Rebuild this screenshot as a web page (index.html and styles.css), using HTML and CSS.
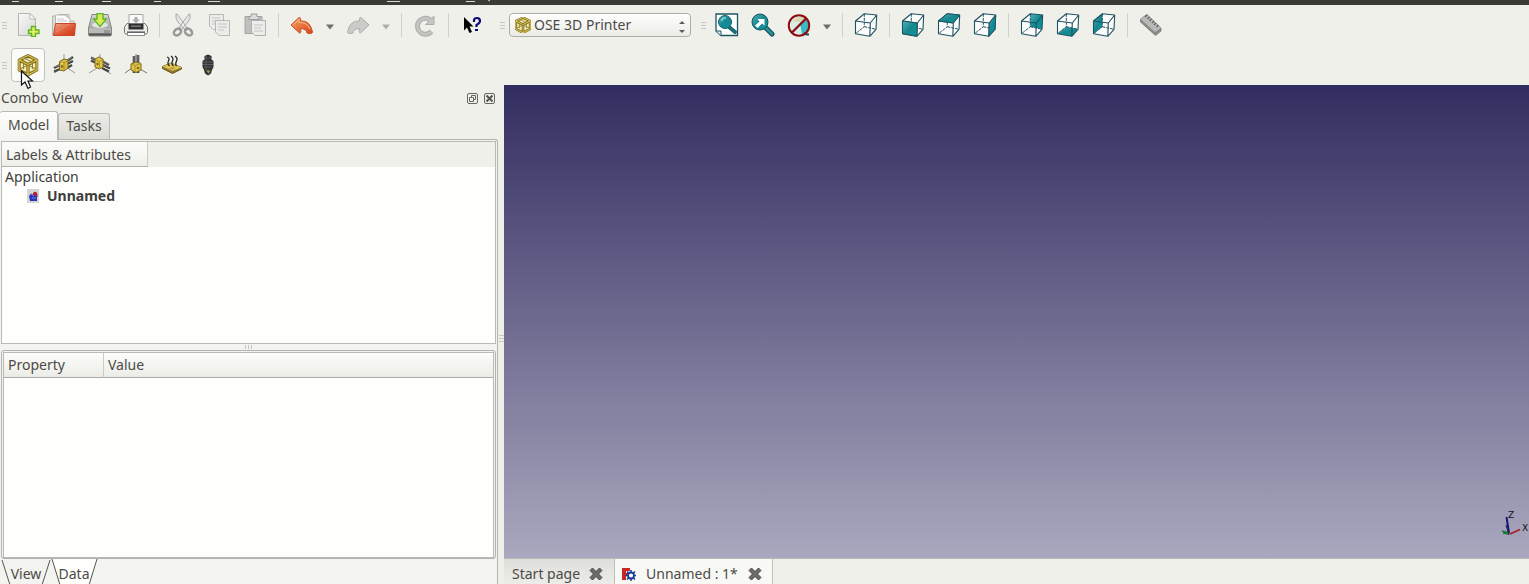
FILE: index.html
```html
<!DOCTYPE html>
<html lang="en">
<head>
<meta charset="utf-8">
<title>FreeCAD</title>
<link rel="stylesheet" href="styles.css">
</head>
<body>
<svg class="defs" aria-hidden="true">
  <defs>
    <linearGradient id="teal" x1="0" y1="0" x2="1" y2="1"><stop offset="0" stop-color="#4fb3ba"/><stop offset=".5" stop-color="#15888f"/><stop offset="1" stop-color="#0c979c"/></linearGradient>
    <linearGradient id="orange" x1="0" y1="0" x2="1" y2="1"><stop offset="0" stop-color="#f5a45f"/><stop offset="1" stop-color="#d9441b"/></linearGradient>
    <linearGradient id="red" x1="0" y1="0" x2="1" y2="1"><stop offset="0" stop-color="#f0a585"/><stop offset=".6" stop-color="#dd5532"/><stop offset="1" stop-color="#cf3517"/></linearGradient>
    <linearGradient id="paper" x1="0" y1="0" x2="1" y2="1"><stop offset="0" stop-color="#fafafa"/><stop offset="1" stop-color="#d6d6d4"/></linearGradient>
    <linearGradient id="metal" x1="0" y1="0" x2="0" y2="1"><stop offset="0" stop-color="#d8d8d6"/><stop offset="1" stop-color="#8a8a88"/></linearGradient>
    <symbol id="wire" viewBox="0 0 24 24">
      <path d="M10.3 .8V13.7L1.5 20.7M10.3 13.7L22 16.3" fill="none" stroke="#1f5261" stroke-width="1" stroke-dasharray="3 1"/>
      <path d="M1.5 8L10.3 .8L22.700 2L16.3 10ZM1.5 8V20.7L15.8 23.3L16.3 10M15.8 23.3L22 16.3L22.700 2" fill="none" stroke="#1f5261" stroke-width="1.1" stroke-linejoin="round"/>
    </symbol>
    <symbol id="frame" viewBox="0 0 24 24">
      <path d="M12 2.500L21 7V17L12 22L3 17V7Z" fill="#c4ac42"/>
      <path d="M5 10L10 12.500V18.500L5 16ZM19 10L14 12.500V18.500L19 16ZM12 5L16.500 7L12 9.500L7.500 7Z" fill="#f3efd2"/>
      <path d="M12 2.500L21 7V17L12 22L3 17V7ZM3 7L12 11.500L21 7M12 11.500V22" fill="none" stroke="#746319" stroke-width="2.600" stroke-linejoin="round"/>
      <path d="M12 2.500L21 7V17L12 22L3 17V7ZM3 7L12 11.500L21 7M12 11.500V22" fill="none" stroke="#dcc65a" stroke-width="1.300" stroke-linejoin="round"/>
      <path d="M4 16L12 12L20 16M7.500 9.500V16M16.500 9.500V16M8 5L16 9" fill="none" stroke="#97832b" stroke-width="1.100"/>
    </symbol>
    <symbol id="cross" viewBox="0 0 14 14"><path d="M1 3.500L3.500 1L7 4.500L10.500 1L13 3.500L9.500 7L13 10.500L10.500 13L7 9.500L3.500 13L1 10.500L4.500 7Z" fill="#6b6c68" stroke="#4a4b47" stroke-linejoin="round"/></symbol>
  </defs>
</svg>

<div class="menubar">
  <svg width="500" height="5"><path d="M12 1.500H19M55 1.500H63M102 1.500H111M154 1.500H161M208 1.500H220M387 1.500H400M466 1.500H475" stroke="#d8d7d0"/><path d="M488 0L490 1" stroke="#d8d7d0"/></svg>
</div>

<header class="toolbars">
  <div class="toolrow">
    <div class="toolgroup file-tools">
      <span class="grip"></span>
      <button class="tool" aria-label="New"><svg viewBox="0 0 24 24"><path d="M2.500 .5H14L19.500 6V22.500H2.500Z" fill="url(#paper)" stroke="#b4b4b1"/><path d="M14 .5V6H19.500Z" fill="#fff" stroke="#bababa"/><path d="M15.500 13.500H19.500V17H23V20.500H19.500V23.500H15.500V20.500H12.500V17H15.500Z" fill="#e2ee5e" stroke="#5bb52a" stroke-width="1.400"/></svg></button>
      <button class="tool" aria-label="Open"><svg viewBox="0 0 24 24"><path d="M.5 22V3H7V1.500H17V8H22V22Z" fill="#deded9" stroke="#b5b5b0"/><path d="M3.500 2H13L18 6V12H3.500Z" fill="#fafafa" stroke="#b8b8b3"/><path d="M5 6H12M5 8H15" stroke="#c9c9c9"/><path d="M3.500 10.500H23.500L22.500 22.500H1.500Z" fill="url(#red)" stroke="#ca452a"/><path d="M4 19L17 11" stroke="#f3a080" stroke-dasharray="1 1"/></svg></button>
      <button class="tool" aria-label="Save"><svg viewBox="0 0 24 24"><path d="M4 1.500H20L23.500 15V21.500Q23.500 23 22 23H2Q.5 23 .5 21.500V15Z" fill="url(#metal)" stroke="#858583"/><path d="M1 15H23V20H1Z" fill="#b9b9b7"/><ellipse cx="12" cy="12" rx="8" ry="3" fill="#e3e3df"/><path d="M1 21.500H23" stroke="#555" stroke-width="2"/><path d="M17 17V20M19 17V20M21 17V20" stroke="#777"/><path d="M9 .5H15V6H18.500L12 13.500L5.500 6H9Z" fill="#d8ed4d" stroke="#5cb52e" stroke-width="1.400"/></svg></button>
      <button class="tool" aria-label="Print"><svg viewBox="0 0 24 24"><path d="M5 12V1.500H19V12" fill="#fafafa" stroke="#a7a7a5"/><path d="M10.500 4H13.500V6.500H16L12 10L8 6.500H10.500Z" fill="#aaa"/><path d="M3 10.500H21L23.500 14V19.500Q23.500 21 22 21H2Q.5 21 .5 19.500V14Z" fill="#ededeb" stroke="#777"/><path d="M4.500 11H19.500V16.500H4.500Z" fill="#2e3030"/><path d="M7 12.500H17V14H7Z" fill="#777"/><path d="M3.500 19.500H20.500V22.500H3.500Z" fill="#fff" stroke="#888"/><path d="M3 19H21" stroke="#444"/></svg></button>
      <span class="sep"></span>
      <button class="tool" aria-label="Cut"><svg viewBox="0 0 24 24"><path d="M5 1Q4 5 7 9L15 18L17 16L6 1ZM19 1Q20 5 17 9L9 18L7 16L18 1Z" fill="#e8e8e5" stroke="#aaa"/><ellipse cx="6.500" cy="19" rx="4" ry="3" fill="none" stroke="#999b98" stroke-width="2.500" transform="rotate(-40 6.500 19)"/><ellipse cx="17.500" cy="19" rx="4" ry="3" fill="none" stroke="#999b98" stroke-width="2.500" transform="rotate(40 17.500 19)"/></svg></button>
      <button class="tool" aria-label="Copy"><svg viewBox="0 0 24 24"><g fill="#ececea" stroke="#b7b8b5"><path d="M2.500 1.500H16.500V16.500H6L2.500 13Z"/><path d="M8.500 7.500H22.500V22.500H12L8.500 19Z"/></g><path d="M5 5H13M5 8H8M5 11H8M11 11H20M11 14H20M11 17H17" stroke="#c4c5c1"/></svg></button>
      <button class="tool" aria-label="Paste"><svg viewBox="0 0 24 24"><path d="M2 3.500H19V20.500H2Z" fill="#bfc0bd" stroke="#a5a6a3"/><path d="M6 3.500H8V1H14V3.500H16V6.500H6Z" fill="#dbdcda" stroke="#9c9d9a"/><path d="M8.500 7.500H22.500V22.500H12L8.500 19Z" fill="#ededeb" stroke="#b1b2af"/><path d="M11 12H20M11 15H18M11 18H20" stroke="#c4c5c1"/></svg></button>
      <span class="sep"></span>
      <button class="tool" aria-label="Undo"><svg viewBox="0 0 24 24"><path d="M1 12L9 4.500Q11 4 10.500 8Q20 7 22.500 19Q22 21.500 17 20Q17 16 10.500 15.500Q11.500 20 9.500 20Z" fill="url(#orange)" stroke="#c84f24" stroke-linejoin="round"/><path d="M3 12L9 6.500V9.500Q17 9 20 16" fill="none" stroke="#f7bd8e"/></svg></button>
      <button class="more" aria-label="Undo history"><svg viewBox="0 0 8 6"><path d="M0 .5H8L4 5.500Z" fill="#6e6f6b"/></svg></button>
      <button class="tool" aria-label="Redo"><svg viewBox="0 0 24 24"><path d="M23 12L15 4.500Q13 4 13.500 8Q4 7 1.500 19Q2 21.500 7 20Q7 16 13.500 15.500Q12.500 20 14.500 20Z" fill="#cbccc9" stroke="#adaeab" stroke-linejoin="round"/></svg></button>
      <button class="more" aria-label="Redo history"><svg viewBox="0 0 8 6"><path d="M0 .5H8L4 5.500Z" fill="#aeafab"/></svg></button>
      <span class="sep"></span>
      <button class="tool" aria-label="Refresh"><svg viewBox="0 0 24 24"><path d="M18.500 18.500A8 8 0 1 1 17.500 7" fill="none" stroke="#adaeab" stroke-width="5"/><path d="M21 3V11.500H12.500Z" fill="#c5c6c3" stroke="#adaeab" stroke-linejoin="round"/><path d="M18.500 18.500A8 8 0 1 1 17.500 7" fill="none" stroke="#c3c4c1" stroke-width="3"/></svg></button>
      <span class="sep"></span>
      <button class="tool" aria-label="What's this?"><svg viewBox="0 0 24 24"><path d="M4 4V17.500L7 14.500L9.500 20L12 19L9.500 13.500H13.500Z" fill="#000"/><path d="M14 9V7.500Q14 5 17 5Q20 5 20 8Q20 10 16.500 12V14M15 17H18" fill="none" stroke="#0a0a78" stroke-width="2.200"/></svg></button>
    </div>
    <div class="toolgroup bench-tools">
      <span class="grip"></span>
      <label class="bench"><svg viewBox="2 2 20 20"><use href="#frame" width="24" height="24"/></svg>
        <select aria-label="Workbench"><option>OSE 3D Printer</option></select>
        <svg class="spin" viewBox="0 0 6 12"><path d="M0 3H6L3 0ZM0 9H6L3 12Z" fill="#5c5d59"/></svg>
      </label>
    </div>
    <div class="toolgroup view-tools">
      <span class="grip"></span>
      <button class="tool" aria-label="Fit all"><svg viewBox="0 0 24 24"><path d="M1 1H22.500V22.500H6L1 18Z" fill="#fff" stroke="#1c5464" stroke-width="1.300"/><path d="M1 18H6V22.500" fill="#d8e5e8" stroke="#1c5464"/><path d="M14 14L20 19" stroke="#1b6a76" stroke-width="4" stroke-linecap="round"/><circle cx="10" cy="9" r="6.500" fill="url(#teal)" stroke="#17616d"/><path d="M6.500 8Q7 4.500 11 5" fill="none" stroke="#8ccdd1" stroke-width="1.500"/></svg></button>
      <button class="tool" aria-label="Fit selection"><svg viewBox="0 0 24 24"><path d="M15 15L21 21" stroke="#164f5c" stroke-width="5" stroke-linecap="round"/><path d="M15 15L21 21" stroke="#24949b" stroke-width="2.500" stroke-linecap="round"/><circle cx="9" cy="9" r="8" fill="url(#teal)" stroke="#17515d"/><path d="M4 12.500L8.500 8.500L6.500 6H13.500V12.500L11 10.500L6.500 15Z" fill="#fff"/></svg></button>
      <button class="tool" aria-label="Draw style"><svg viewBox="0 0 24 24"><path d="M4 8L11 3H20V16L14 22L4 18Z" fill="#d8ece8"/><path d="M13 10L21 6V17L15 22Z" fill="#39bdc4"/><path d="M5 8L11 4H18L13 9Z" fill="#d6d9aa"/><path d="M17 20L20 21.500H22" stroke="#174d5b" stroke-width="2"/><circle cx="12" cy="12.500" r="10.200" fill="none" stroke="#8c0c12" stroke-width="2"/><path d="M5 19.500L19 5.500" stroke="#8c0c12" stroke-width="2.300"/></svg></button>
      <button class="more" aria-label="Draw styles"><svg viewBox="0 0 8 6"><path d="M0 .5H8L4 5.500Z" fill="#6e6f6b"/></svg></button>
      <span class="sep"></span>
      <button class="tool" aria-label="Axonometric"><svg viewBox="0 0 24 24"><path d="M1.500 8L10.300 .8L22.700 2L22 16.300L15.800 23.300L1.500 20.700Z" fill="#fbfcfb"/><use href="#wire"/></svg></button>
      <span class="sep"></span>
      <button class="tool" aria-label="Front"><svg viewBox="0 0 24 24"><path d="M1.500 8L10.300 .8L22.700 2L22 16.300L15.800 23.300L1.500 20.700Z" fill="#fbfcfb"/><use href="#wire"/><path d="M1.500 8L16.300 10L15.800 23.300L1.500 20.700Z" fill="url(#teal)" stroke="#1f5261"/></svg></button>
      <button class="tool" aria-label="Top"><svg viewBox="0 0 24 24"><path d="M1.500 8L10.300 .8L22.700 2L22 16.300L15.800 23.300L1.500 20.700Z" fill="#fbfcfb"/><use href="#wire"/><path d="M1.500 8L10.300 .8L22.700 2L16.300 10Z" fill="url(#teal)" stroke="#1f5261"/></svg></button>
      <button class="tool" aria-label="Right"><svg viewBox="0 0 24 24"><path d="M1.500 8L10.300 .8L22.700 2L22 16.300L15.800 23.300L1.500 20.700Z" fill="#fbfcfb"/><use href="#wire"/><path d="M16.300 10L22.700 2L22 16.300L15.800 23.300Z" fill="url(#teal)" stroke="#1f5261"/></svg></button>
      <span class="sep"></span>
      <button class="tool" aria-label="Rear"><svg viewBox="0 0 24 24"><path d="M1.500 8L10.300 .8L22.700 2L22 16.300L15.800 23.300L1.500 20.700Z" fill="#fbfcfb"/><path d="M10.300 .8L22.700 2L22 16.300L10.300 13.700Z" fill="url(#teal)"/><use href="#wire"/></svg></button>
      <button class="tool" aria-label="Bottom"><svg viewBox="0 0 24 24"><path d="M1.500 8L10.300 .8L22.700 2L22 16.300L15.800 23.300L1.500 20.700Z" fill="#fbfcfb"/><path d="M1.500 20.700L10.300 13.700L22 16.300L15.800 23.300Z" fill="url(#teal)"/><use href="#wire"/></svg></button>
      <button class="tool" aria-label="Left"><svg viewBox="0 0 24 24"><path d="M1.500 8L10.300 .8L22.700 2L22 16.300L15.800 23.300L1.500 20.700Z" fill="#fbfcfb"/><path d="M1.500 8L10.300 .8V13.700L1.500 20.700Z" fill="url(#teal)"/><use href="#wire"/></svg></button>
      <span class="sep"></span>
      <button class="tool" aria-label="Measure"><svg viewBox="0 0 24 24"><path d="M1.500 6L8 1.500L22 15V18L16.500 22.500L1.500 9Z" fill="#8a8b88" stroke="#858683"/><path d="M1.500 6L8 1.500L22 15L16 19Z" fill="#b9bab7"/><path d="M8 2L6 4M10.500 4L8.500 6M12.500 6L10.500 8M15 8L13 10M17 10L15 12M19.500 12L17.500 14" stroke="#5e5f5c" stroke-width="1.200"/></svg></button>
    </div>
  </div>
  <div class="toolrow">
    <div class="toolgroup">
      <span class="grip"></span>
      <button class="tool active" aria-label="Add frame"><svg viewBox="0 0 24 24"><use href="#frame"/></svg></button>
      <button class="tool" aria-label="Add X axis"><svg viewBox="0 0 24 24"><path d="M12 1V9M2 20L9 16M14 14L23 20" fill="none" stroke="#999a95"/><path d="M2 15L8 12M15 8L21 4M2 18.500L8 16M15 11L21 8M15 15L20 12" stroke="#454747" stroke-width="2.300"/><path d="M3 14L8 11.500M15 7L20 4" stroke="#858786"/><path d="M7.500 8.500L12 6L16 7V15L12 18L7.500 17Z" fill="#d8bd3e" stroke="#7d671c"/><path d="M8 9L12 10V17M12 10L16 7.500" fill="none" stroke="#a88f2d"/><path d="M9 10L11 10.500" stroke="#f3e78a"/><circle cx="10" cy="13.500" r="1.200" fill="#79661d"/></svg></button>
      <button class="tool" aria-label="Add Y axis"><svg viewBox="0 0 24 24"><path d="M12 1V6M1 20L9 15M15 16L23 21" fill="none" stroke="#999a95"/><path d="M3 4.500L8 7M14 8L21 12M3 7.500L7 9.500M14 11.500L22 15.500M14 15L21 18.500" stroke="#454747" stroke-width="2.300"/><path d="M3 4L8 6.500M15 8L21 11" stroke="#858786"/><path d="M7 6L10.500 4L15 6V14L11.500 16L7 14Z" fill="#e1c743" stroke="#7d671c"/><path d="M7 6.500L11.500 8.500L15 6.500M11.500 8.500V15" fill="none" stroke="#ac942e"/><circle cx="9.500" cy="11" r="1.200" fill="#79661d"/></svg></button>
      <button class="tool" aria-label="Add Z axis"><svg viewBox="0 0 24 24"><path d="M12 1V12L1 20M12 14L23 20" fill="none" stroke="#777872"/><path d="M10 3V20M14 2V20" stroke="#454747" stroke-width="2.600"/><path d="M10 3V9M14 2V9" stroke="#777"/><path d="M7 11L12 9L17 10.500V17L12 19.500L7 17Z" fill="#e1c743" stroke="#7d671c"/><path d="M7 11L11 12.500L17 10.500M11 12.500V19" fill="none" stroke="#a88f2d"/><circle cx="14" cy="15" r="1.300" fill="#79661d"/></svg></button>
      <button class="tool" aria-label="Add heated bed"><svg viewBox="0 0 24 24"><path d="M2.500 13.500L11 10L21.500 14.500V16L12.500 20.500L2.500 15.500Z" fill="#8c7528" stroke="#6f5b20"/><path d="M2.500 13.500L11 10L21.500 14.500L12.500 18Z" fill="#dfc455"/><path d="M8 16L12 14L16 15L12 17Z" fill="#c3a13a"/><path d="M7 4Q10 5 8.500 8T9.500 13M11 3Q14 5 12.500 8T13.500 13M15 3Q18 5 16.500 8T16.500 13" fill="none" stroke="#292b2b" stroke-width="1.300"/></svg></button>
      <button class="tool" aria-label="Add extruder"><svg viewBox="0 0 24 24"><path d="M8.500 3L12 1.500L15.500 3V6.500L17.500 8V14L16 17L15 20.500L12 22.500L9 20.500L8 17L6.500 14V8L8.500 6.500Z" fill="#303334"/><path d="M8.500 5H15.500M7 9H17M7 11.500H17M8 14H16" stroke="#5b5f5f"/><path d="M10 3V17" stroke="#555959"/><path d="M10 18L12 16.500L14.500 18L12.500 21Z" fill="#a8955a" stroke="#494433"/></svg></button>
    </div>
  </div>
  <svg class="pointer" viewBox="0 0 14 20" aria-hidden="true"><path d="M1.500 1V15L5 12L8 18.500L10.500 17L8 11H12.500Z" fill="#fff" stroke="#111" stroke-width="1.200"/></svg>
</header>

<main class="workspace">
  <aside class="dock">
    <div class="dock-title">
      <h1>Combo View</h1>
      <button aria-label="Float"><svg viewBox="0 0 11 11"><rect x=".5" y=".5" width="10" height="10" rx="1.500" fill="none" stroke="#686964"/><path d="M4.500 4.500V2.500H8.500V6.500H6.500M2.500 4.500H6.500V8.500H2.500Z" fill="none" stroke="#686964"/></svg></button>
      <button aria-label="Close panel"><svg viewBox="0 0 11 11"><rect x=".5" y=".5" width="10" height="10" rx="1.500" fill="none" stroke="#686964"/><path d="M2.500 2.500L8.500 8.500M8.500 2.500L2.500 8.500" stroke="#555651" stroke-width="2"/></svg></button>
    </div>
    <nav class="tabs"><button class="tab selected">Model</button><button class="tab">Tasks</button></nav>
    <div class="pane">
      <section class="tree">
        <div class="tree-head"><span>Labels &amp; Attributes</span></div>
        <ul>
          <li>Application</li>
          <li class="doc"><svg viewBox="0 0 12 14"><rect width="12" height="14" fill="#d5d5d3"/><path d="M6 4Q9 1 10.500 5V8H6Z" fill="#b52531"/><path d="M2 7L4 4.500L7 6L10 7V12H3Z" fill="#2a36b9"/><path d="M4 5L7 7M5 9H9" stroke="#7982df"/></svg><strong>Unnamed</strong></li>
        </ul>
      </section>
      <div class="split"><i></i></div>
      <section class="props">
        <table><thead><tr><th>Property</th><th>Value</th></tr></thead></table>
      </section>
      <nav class="subtabs">
        <button><svg viewBox="0 0 50 26" aria-hidden="true"><path d="M1 1L9 26H41L49 1" fill="#f3f4ef" stroke="#555651"/></svg><span>View</span></button>
        <button class="current"><svg viewBox="0 0 50 26" aria-hidden="true"><path d="M1 0L9 26H38L46 0" fill="#fefefc" stroke="#555651"/></svg><span>Data</span></button>
      </nav>
    </div>
    <div class="dock-grip"><span class="grip"></span></div>
  </aside>
  <section class="documents">
    <div class="viewport">
      <svg class="axes" viewBox="0 0 28 30" role="img" aria-label="Axis cross"><path d="M8 25L5.500 9" stroke="#171779" stroke-width="2"/><path d="M9 26L19 21.500" stroke="#a61c24" stroke-width="1.600"/><path d="M8 25L1 23M2 25L7 26" stroke="#217a36" stroke-width="1.500"/><path d="M5 17L8 27" stroke="#172142"/><text x="7" y="10">Z</text><text x="21" y="23">X</text></svg>
    </div>
    <nav class="doctabs">
      <div class="doctab"><a href="#">Start page</a><button aria-label="Close Start page"><svg viewBox="0 0 14 14"><use href="#cross"/></svg></button></div>
      <div class="doctab open"><svg viewBox="0 0 14 14" aria-hidden="true"><path d="M0 1H8V4H4V6H7V9H4V13H0Z" fill="#cb2824"/><circle cx="9" cy="8.500" r="3" fill="#fff" stroke="#173d9b" stroke-width="1.800"/><path d="M9 3V5M9 12V14M3.500 8.500H5.500M12.500 8.500H14M5 4.500L6.500 6M11.500 11L13 12.500M13 4.500L11.500 6M5 12.500L6.500 11" stroke="#173d9b" stroke-width="1.500"/></svg><a href="#">Unnamed : 1*</a><button aria-label="Close Unnamed"><svg viewBox="0 0 14 14"><use href="#cross"/></svg></button></div>
    </nav>
  </section>
</main>
</body>
</html>
```
FILE: styles.css
```css
* { box-sizing: border-box; }
body {
  margin: 0;
  height: 100vh;
  display: flex;
  flex-direction: column;
  overflow: hidden;
  background: #f0f0eb;
  color: #4c4b48;
  font: 14px/18px "Noto Sans", "Open Sans", sans-serif;
}
button {
  padding: 0;
  border: 0;
  background: none;
  color: inherit;
  font: inherit;
}
svg { display: block; flex: none; }
.defs { position: absolute; width: 0; height: 0; }

.menubar { height: 5px; background: #3b3a34; flex: none; overflow: hidden; }
.toolbars { position: relative; flex: none; }
.toolrow { display: flex; height: 40px; }
.toolgroup { display: flex; align-items: center; }
.file-tools { width: 498px; }
.bench-tools { width: 200px; }
.grip {
  width: 5px;
  height: 7px;
  margin: 0 4px 0 2px;
  flex: none;
  background: repeating-linear-gradient(#c6c7c2 0 1px, transparent 1px 3px);
}
.file-tools .grip { margin-right: 3px; }
.view-tools .grip { margin-left: 3px; margin-right: 3px; }
.tool {
  width: 36px;
  height: 36px;
  display: grid;
  place-items: center;
  flex: none;
}
.tool svg { width: 24px; height: 24px; }
.active {
  width: 34px;
  height: 34px;
  margin-right: 1px;
  border: 1px solid #c2c3be;
  border-radius: 4px;
  background: #fbfbf9;
}
.more { width: 20px; height: 36px; display: grid; place-items: center; }
.more svg { width: 8px; height: 6px; margin-top: 3px; }
.sep { width: 1px; height: 24px; margin: 0 5px; background: #cfd0cb; flex: none; }
.bench {
  display: flex;
  align-items: center;
  width: 182px;
  height: 24px;
  padding: 0 5px;
  border: 1px solid #adaea9;
  border-radius: 4px;
  background: linear-gradient(#fefefe, #ebebe6);
}
.bench svg { width: 16px; height: 16px; }
.bench .spin { width: 6px; height: 12px; margin-top: 4px; }
.bench select {
  flex: 1;
  min-width: 0;
  height: 20px;
  padding: 0 3px;
  border: 0;
  appearance: none;
  background: none;
  color: inherit;
  font: inherit;
}
.pointer { position: absolute; left: 20px; top: 65px; width: 14px; height: 20px; z-index: 2; }

.workspace { display: flex; flex: 1; min-height: 0; }
.dock {
  display: grid;
  grid-template: 26px 28px 1fr / 498px 6px;
  flex: none;
}
.dock-title { display: flex; align-items: center; gap: 6px; padding: 0 3px 0 1px; }
.dock-title h1 { flex: 1; margin: 0; font: inherit; }
.dock-title svg { width: 11px; height: 11px; }
.tabs { display: flex; align-items: flex-end; grid-row: 2; }
.tab {
  height: 26px;
  padding: 0 7px 2px;
  border: 1px solid #b9bab5;
  border-bottom: 0;
  border-radius: 3px 3px 0 0;
  background: linear-gradient(#ebebe7, #dcdcd7);
}
.tab.selected {
  height: 29px;
  margin-bottom: -1px;
  padding: 0 8px 2px;
  border-left: 0;
  background: linear-gradient(#fdfdfb, #f4f5f0);
  z-index: 1;
}
.pane {
  grid-row: 3;
  display: flex;
  flex-direction: column;
  min-height: 0;
  padding: 1px 1px 0;
  border-top: 1px solid #b2b3ae;
  border-right: 1px solid #b2b3ae;
  border-radius: 0 3px 0 0;
  background: #f3f4ef;
}
.tree { height: 203px; border: 1px solid #b9bab5; background: #fefefc; }
.tree-head { display: flex; height: 25px; background: #f0f0eb; }
.tree-head span {
  width: 146px;
  padding: 4px 4px 2px;
  border-right: 1px solid #cbccc7;
  border-bottom: 1px solid #b2b3ae;
  background: linear-gradient(#fcfcfa, #efefea);
}
.tree ul { margin: 0; padding: 0 3px; list-style: none; color: #3f3e3b; line-height: 19px; }
.doc { display: flex; align-items: center; gap: 8px; padding-left: 22px; }
.doc svg { width: 12px; height: 14px; }
.split { display: grid; place-items: center; height: 6px; }
.split i { width: 7px; height: 4px; background: repeating-linear-gradient(90deg, #c4c5c0 0 1px, transparent 1px 3px); }
.props {
  flex: 1;
  min-height: 0;
  padding: 1px;
  border: 1px solid #b2b3ae;
  border-radius: 3px;
}
.props::after {
  content: "";
  display: block;
  height: calc(100% - 26px);
  border: 1px solid #b9bab5;
  border-top: 0;
  background: #fefefc;
}
table { width: 100%; border-collapse: separate; border-spacing: 0; border: 1px solid #b9bab5; border-bottom: 0; }
th {
  height: 25px;
  padding: 0 4px;
  border-bottom: 1px solid #aaaba6;
  background: linear-gradient(#fcfcfa, #ececE7);
  font-weight: 400;
  text-align: left;
}
th:first-child { width: 100px; border-right: 1px solid #cbccc7; }
.subtabs { display: flex; height: 25px; flex: none; }
.subtabs button { position: relative; width: 50px; height: 25px; padding-top: 4px; flex: none; }
.subtabs .current { padding-right: 4px; }
.subtabs svg { position: absolute; inset: 0; width: 50px; height: 26px; }
.subtabs span { position: relative; }
.dock-grip { grid-area: 3 / 2; display: flex; align-items: center; padding-bottom: 46px; }
.dock-grip .grip { margin: 0 0 0 1px; }

.documents { display: flex; flex-direction: column; flex: 1; min-width: 0; }
.viewport {
  position: relative;
  flex: 1;
  background: linear-gradient(#322d60, #aaa8bf);
}
.axes { position: absolute; right: 0; bottom: 20px; width: 28px; height: 30px; }
.axes text { font: 9px "DejaVu Sans", sans-serif; fill: #111; }
.doctabs { display: flex; height: 26px; flex: none; border-top: 1px solid #b9bab5; }
.doctab {
  display: flex;
  align-items: center;
  gap: 9px;
  padding: 4px 11px 0 8px;
  border-right: 1px solid #c0c1bc;
  background: linear-gradient(#dededa, #ececE8);
}
.doctab.open { gap: 10px; padding: 5px 10px 0 7px; background: #f8f9f5; }
.doctab a { color: inherit; text-decoration: none; }
.doctab svg { width: 14px; height: 14px; }
```
